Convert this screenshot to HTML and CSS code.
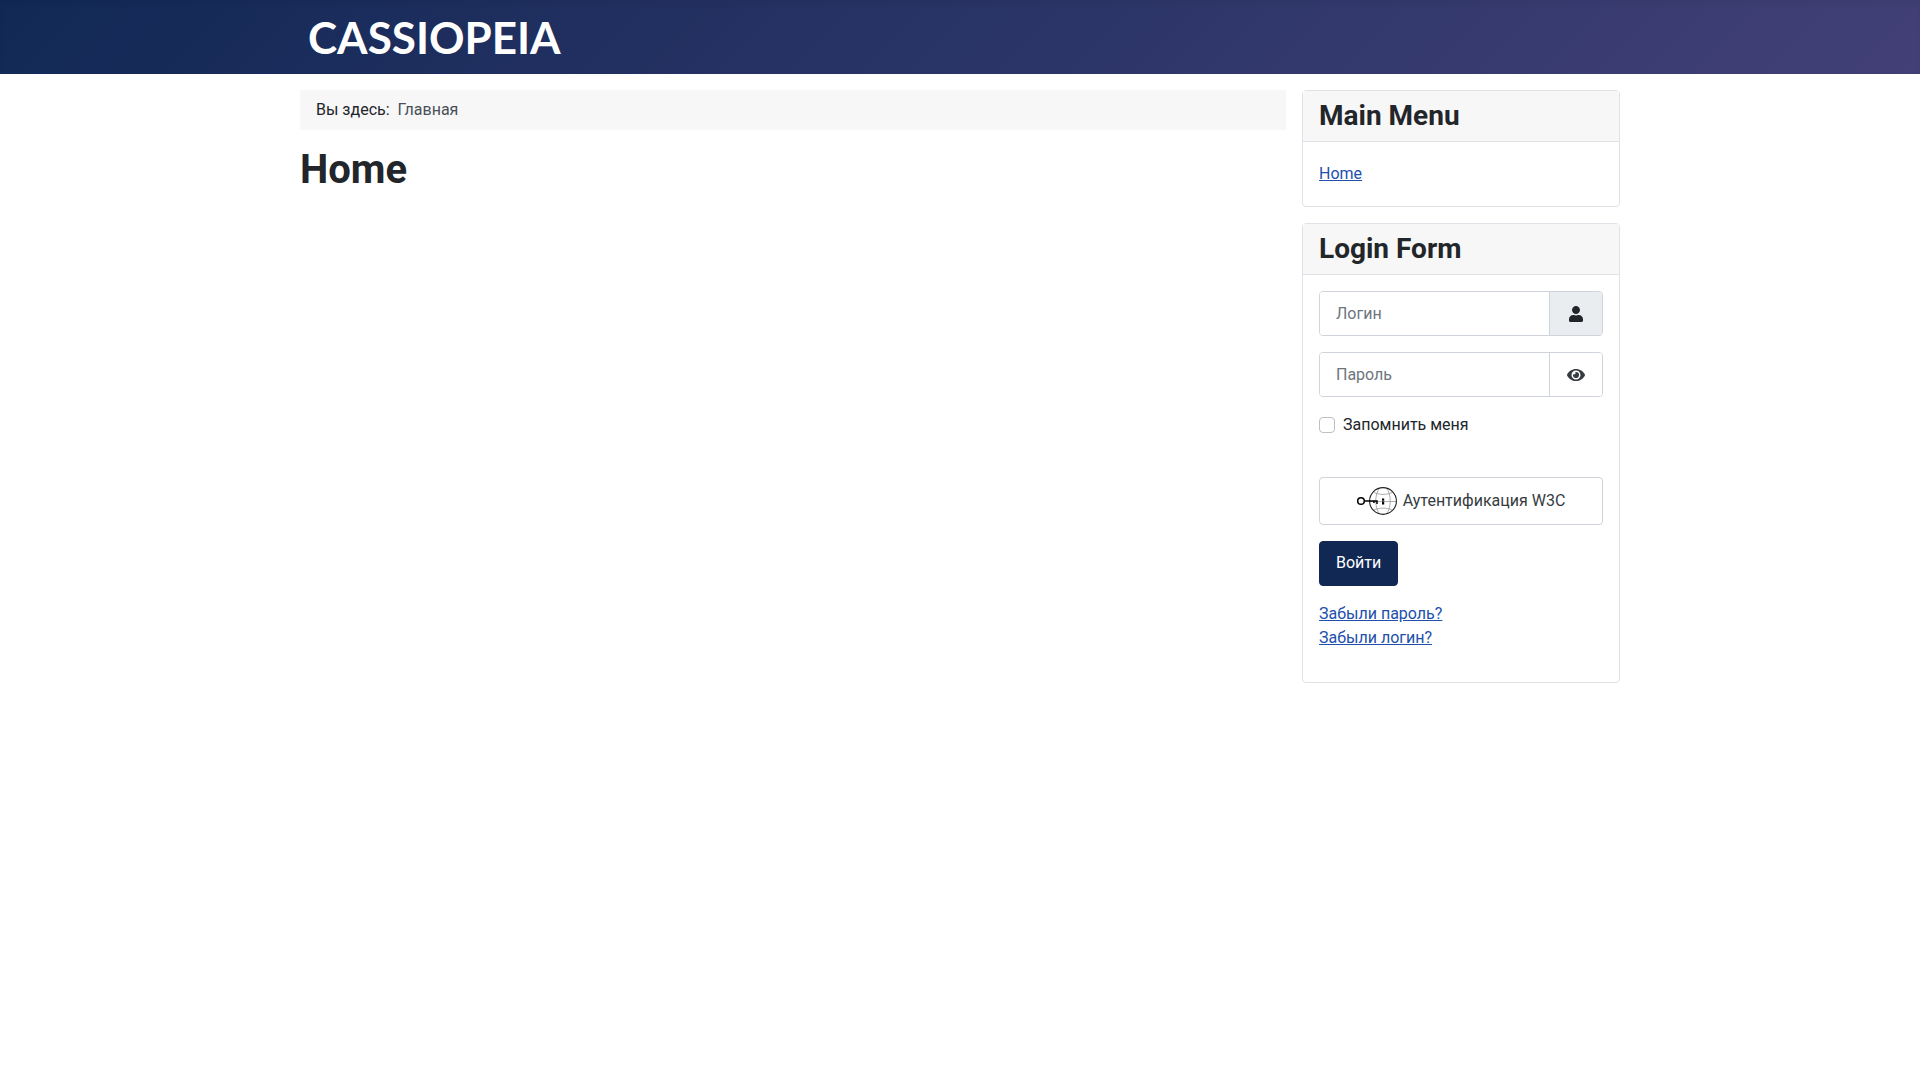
FILE: index.html
```html
<!DOCTYPE html>
<html lang="ru" dir="ltr">
<head>
  <meta charset="UTF-8">
  <meta name="viewport" content="width=device-width, initial-scale=1.0">
  <title>Home</title>
  <link rel="stylesheet" href="styles.css">
</head>
<body>
  <header class="header">
    <div class="header-inner">
      <a class="brand" href="#">CASSIOPEIA</a>
    </div>
  </header>

  <div class="site-grid">
    <main class="content">
      <nav class="breadcrumbs" aria-label="Breadcrumbs">
        <ol>
          <li>Вы здесь:</li>
          <li class="active">Главная</li>
        </ol>
      </nav>
      <h1>Home</h1>
    </main>

    <aside class="sidebar">
      <section class="card">
        <h3 class="card-header">Main Menu</h3>
        <div class="card-body">
          <ul class="menu">
            <li><a href="#">Home</a></li>
          </ul>
        </div>
      </section>

      <section class="card">
        <h3 class="card-header">Login Form</h3>
        <div class="card-body">
          <form class="login-form" action="#" method="post">
            <div class="input-group">
              <input type="text" id="username" name="username" placeholder="Логин" aria-label="Логин">
              <label class="input-addon" for="username" title="Логин">
                <svg class="icon" viewBox="0 0 448 512" aria-hidden="true">
                  <path d="M224 256c70.700 0 128-57.300 128-128S294.700 0 224 0 96 57.300 96 128s57.300 128 128 128zm89.600 32h-16.700c-22.200 10.200-46.900 16-72.900 16s-50.600-5.800-72.900-16h-16.700C60.200 288 0 348.200 0 422.400V464c0 26.500 21.500 48 48 48h352c26.500 0 48-21.500 48-48v-41.600c0-74.200-60.200-134.400-134.400-134.400z"/>
                </svg>
              </label>
            </div>

            <div class="input-group">
              <input type="password" id="password" name="password" placeholder="Пароль" aria-label="Пароль">
              <button type="button" class="input-addon show-password" aria-label="Показать пароль">
                <svg class="icon" viewBox="0 0 576 512" aria-hidden="true">
                  <path d="M572.520 241.400C518.290 135.590 410.930 64 288 64S57.680 135.640 3.480 241.410a32.350 32.350 0 0 0 0 29.190C57.710 376.410 165.070 448 288 448s230.320-71.640 284.520-177.410a32.350 32.350 0 0 0 0-29.190zM288 400a144 144 0 1 1 144-144 143.930 143.930 0 0 1-144 144zm0-240a95.310 95.310 0 0 0-25.310 3.790 47.850 47.850 0 0 1-66.900 66.900A95.780 95.780 0 1 0 288 160z"/>
                </svg>
              </button>
            </div>

            <div class="form-check">
              <input type="checkbox" id="remember" name="remember">
              <label for="remember">Запомнить меня</label>
            </div>

            <button type="button" class="btn btn-webauthn">
              <svg class="webauthn-icon" viewBox="0 0 40 28" aria-hidden="true">
                <g class="globe-lines">
                  <path d="M12.500 14.500h27M17 5.500c5 2.500 13 2.500 18 0M17 23c5-2.500 13-2.500 18 0"/>
                  <path d="M22.500 1c-5 7-5 19 0 26M29.500 1c5 7 5 19 0 26"/>
                </g>
                <circle class="globe-edge" cx="26" cy="14" r="13.400"/>
                <circle class="key-ring" cx="4" cy="14" r="3.300"/>
                <path class="key-shaft" d="M7.500 14H20v3M17 14v2"/>
                <path class="key-hole" d="M25 11.500h2.200v2.200H25zM25 14.500h2.200v3H25z"/>
              </svg>
              Аутентификация W3C
            </button>

            <button type="submit" class="btn btn-primary">Войти</button>

            <ul class="login-links">
              <li><a href="#">Забыли пароль?</a></li>
              <li><a href="#">Забыли логин?</a></li>
            </ul>
          </form>
        </div>
      </section>
    </aside>
  </div>
</body>
</html>
```

FILE: styles.css
```css
:root {
  --primary: #112855;
  --hover: #424077;
  --link: #224faa;
  --text: #22262a;
  --muted: #6d757e;
  --line: #dfe3e7;
  --field-line: #ced4da;
  --shade: #f7f7f7;
  --radius: 4px;
}

* {
  box-sizing: border-box;
}

body {
  margin: 0;
  background: #fff;
  color: var(--text);
  font-family: Roboto, "Noto Sans", sans-serif;
  font-size: 16px;
  line-height: 24px;
}

a {
  color: var(--link);
}

ul, ol {
  list-style: none;
  margin: 0;
  padding: 0;
}

/* Header */
.header {
  background-image: linear-gradient(135deg, var(--primary) 0%, var(--hover) 100%);
  box-shadow: inset 0 5px 5px rgba(0, 0, 0, 0.03);
}

.header-inner {
  max-width: 1320px;
  margin: 0 auto;
  padding: 12px 8px;
}

.brand {
  display: inline-block;
  color: #fff;
  font-family: Lato, sans-serif;
  font-size: 44px;
  font-weight: 700;
  line-height: 50px;
  vertical-align: top;
  text-decoration: none;
}

/* Layout */
.site-grid {
  display: grid;
  grid-template-columns: minmax(0, 1fr) 318px;
  gap: 16px;
  align-items: start;
  max-width: 1320px;
  margin: 0 auto;
  padding: 16px 0;
}

.breadcrumbs {
  margin-bottom: 16px;
  padding: 8px 16px;
  background: var(--shade);
}

.breadcrumbs ol {
  display: flex;
  gap: 8px;
}

.breadcrumbs .active {
  color: #495057;
}

h1 {
  margin: 0;
  font-size: 40px;
  font-weight: 700;
  line-height: 48px;
}

.sidebar {
  display: grid;
  grid-template-columns: minmax(0, 1fr);
  gap: 16px;
}

/* Cards */
.card {
  border: 1px solid var(--line);
  border-radius: var(--radius);
}

.card-header {
  margin: 0;
  padding: 8px 16px;
  background: var(--shade);
  border-bottom: 1px solid var(--line);
  font-size: 28px;
  font-weight: 700;
  line-height: 34px;
}

.card-body {
  padding: 16px;
}

.menu li {
  padding: 4px 0;
}

/* Login form */
.input-group {
  display: flex;
  height: 45px;
  margin-bottom: 16px;
  border: 1px solid var(--field-line);
  border-radius: var(--radius);
  overflow: hidden;
}

.input-group input {
  flex: 1;
  min-width: 0;
  padding: 0 16px;
  border: 0;
  background: #fff;
  color: var(--text);
  font: inherit;
}

.input-group input::placeholder {
  color: var(--muted);
  opacity: 1;
}

.input-addon {
  display: flex;
  align-items: center;
  justify-content: center;
  width: 53px;
  padding: 0;
  border: 0;
  border-left: 1px solid var(--field-line);
  background: #eaedf0;
  color: var(--text);
}

.show-password {
  background: #fff;
  color: #353b41;
  cursor: pointer;
}

.icon {
  height: 16px;
  fill: currentColor;
}

.form-check {
  display: flex;
  align-items: center;
  gap: 8px;
  margin-bottom: 40px;
}

.form-check input {
  appearance: none;
  width: 16px;
  height: 16px;
  margin: 0;
  border: 1px solid #bfbfbf;
  border-radius: var(--radius);
  background: #fff;
}

.form-check input:checked {
  background: var(--primary);
}

.btn {
  display: block;
  margin: 0 0 16px;
  padding: 9px 16px 10px;
  border: 1px solid var(--primary);
  border-radius: var(--radius);
  font: inherit;
  cursor: pointer;
}

.btn-primary {
  background: var(--primary);
  color: #fff;
}

.btn-webauthn {
  display: flex;
  align-items: center;
  justify-content: center;
  gap: 6px;
  width: 100%;
  padding: 9px 16px;
  border-color: var(--field-line);
  background: #fff;
  color: #353b41;
}

.webauthn-icon {
  width: 40px;
  height: 28px;
  fill: none;
  stroke: #000;
}

.globe-lines {
  stroke: #999;
  stroke-width: 0.8;
}

.globe-edge {
  stroke: #222;
  stroke-width: 1.1;
}

.key-ring,
.key-shaft {
  stroke-width: 1.5;
}

.key-hole {
  fill: #000;
  stroke: none;
}

.login-links {
  margin-bottom: 16px;
}

@media (max-width: 768px) {
  .site-grid {
    grid-template-columns: minmax(0, 1fr);
    padding: 16px;
  }
}
```
